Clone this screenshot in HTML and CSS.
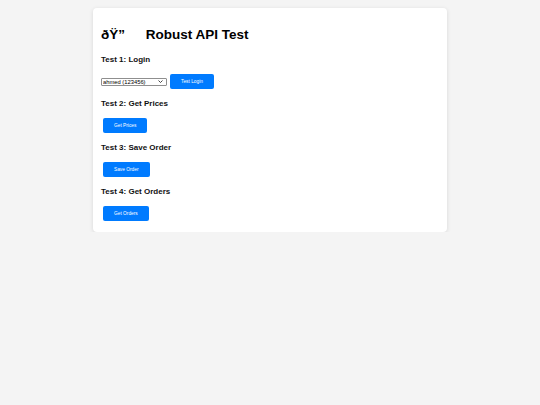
FILE: index.html
```html
<!DOCTYPE html>
<html>
<head>
    <meta charset="utf-8">
    <title>Robust API Test</title>
    <link rel="stylesheet" href="styles.css">
</head>
<body>
    <div class="container">
        <h1><span class="icon">ðŸ”</span> Robust API Test</h1>

        <!-- Test 1 -->
        <div class="test">
            <h3>Test 1: Login</h3>
            <div class="row">
                <select id="user">
                    <option>ahmed (123456)</option>
                </select>
                <button class="btn">Test Login</button>
            </div>
        </div>

        <!-- Test 2 -->
        <div class="test">
            <h3>Test 2: Get Prices</h3>
            <div class="row">
                <button class="btn">Get Prices</button>
            </div>
        </div>

        <!-- Test 3 -->
        <div class="test">
            <h3>Test 3: Save Order</h3>
            <div class="row">
                <button class="btn">Save Order</button>
            </div>
        </div>

        <!-- Test 4 -->
        <div class="test">
            <h3>Test 4: Get Orders</h3>
            <div class="row">
                <button class="btn">Get Orders</button>
            </div>
        </div>
    </div>
</body>
</html>
```

FILE: styles.css
```css
* {
    box-sizing: border-box;
}

body {
    margin: 0;
    padding-top: 8px;
    background-color: #f4f4f4;
    font-family: "Liberation Sans", Arial, sans-serif;
}

.container {
    width: 354px;
    margin: 0 auto;
    padding: 10px 8px 9px;
    background-color: white;
    border-radius: 4px;
    box-shadow: 0 1px 4px rgba(0, 0, 0, 0.12);
}

h1 {
    margin: 9px 0 12px;
    font-size: 13.5px;
    line-height: 16px;
    color: #000;
}

.icon {
    margin-right: 17px;
}

h3 {
    margin: 0 0 8px;
    font-size: 8px;
    line-height: 9px;
    color: #111;
}

.test {
    margin-bottom: 8px;
}

.test:last-child {
    margin-bottom: 0;
}

.row {
    display: flex;
    align-items: center;
    gap: 1px;
}

select {
    appearance: none;
    width: 66px;
    height: 8px;
    padding: 0 0 0 1px;
    font-size: 5.8px;
    line-height: 6px;
    font-family: "Liberation Sans", Arial, sans-serif;
    border: 1px solid #8f8f8f;
    border-radius: 1px;
    color: #000;
    background: white url("data:image/svg+xml;utf8,<svg xmlns='http://www.w3.org/2000/svg' width='5' height='3' viewBox='0 0 5 3'><path d='M0.5 0.5 L2.5 2.5 L4.5 0.5' fill='none' stroke='%23333' stroke-width='0.9'/></svg>") no-repeat right 3px center;
    background-size: 5px 3px;
}

/* Buttons */
.btn {
    margin: 2px;
    height: 15px;
    padding: 0 11px;
    background-color: #007bff;
    color: white;
    border: none;
    border-radius: 2px;
    font-size: 4.8px;
    font-family: "Liberation Sans", Arial, sans-serif;
    cursor: pointer;
}

.btn:hover {
    background-color: #0069d9;
}
```
